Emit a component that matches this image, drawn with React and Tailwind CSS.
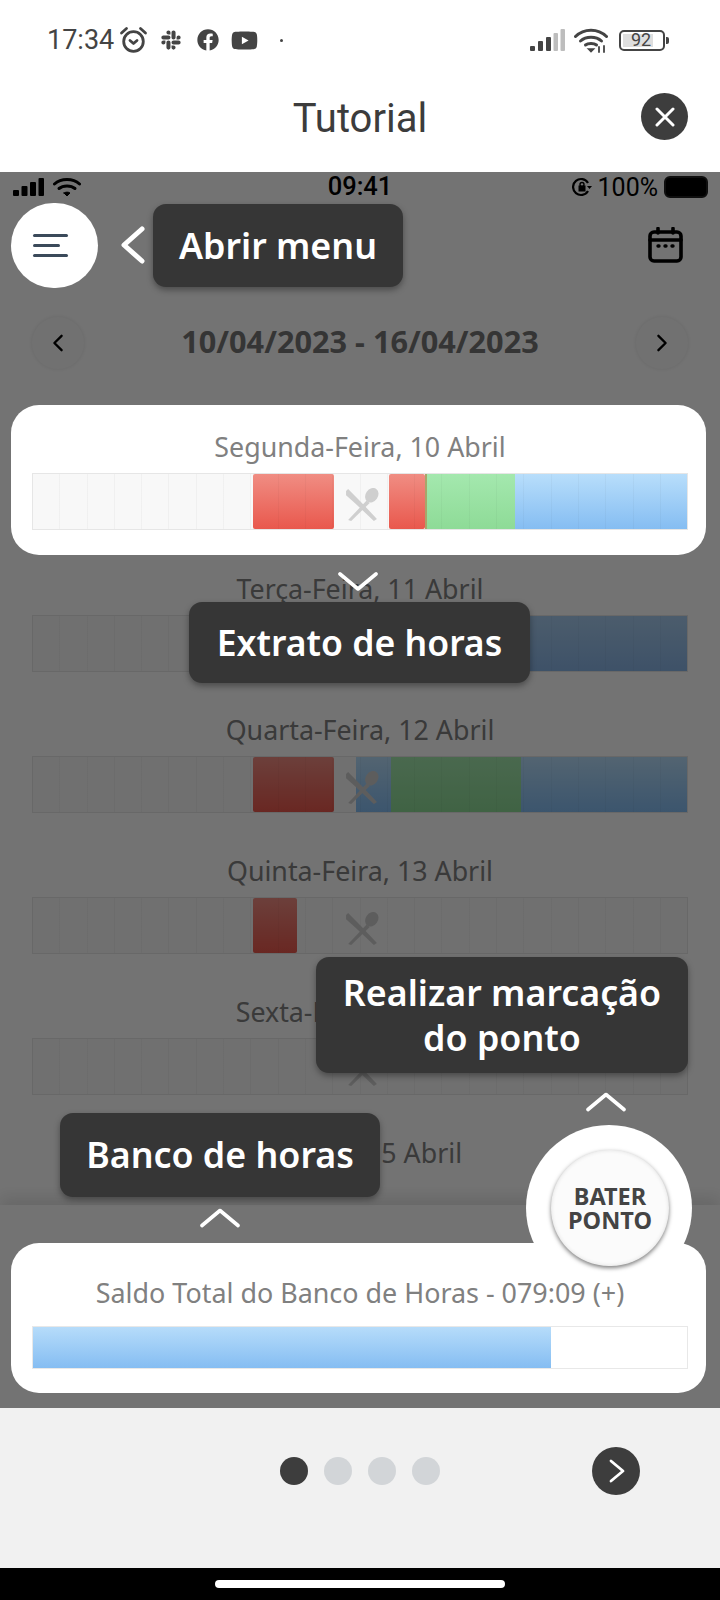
import React from "react";
import { FaSlack, FaFacebook, FaYoutube } from "react-icons/fa";

const Chevron = ({ d, className }) => (
  <svg viewBox="0 0 40 20" className={className} fill="none" stroke="#fff" strokeWidth="3.6" strokeLinecap="round" strokeLinejoin="round">
    <path d={d} />
  </svg>
);
const UP = "M2 18 L20 3 L38 18";
const DOWN = "M2 2 L20 17 L38 2";

const Alarm = () => (
  <svg viewBox="0 0 28 28" className="h-[28px] w-[29px]" fill="none" stroke="#444" strokeWidth="2.8" strokeLinecap="round" strokeLinejoin="round">
    <circle cx="14" cy="15.5" r="9.8" />
    <path d="M10.5 14.5 L14 17.5 L17.5 14.5" />
    <path d="M2 7 L7 2.5 M26 7 L21 2.5" />
  </svg>
);

const Signal = () => (
  <svg viewBox="0 0 35 22" className="h-[22px] w-[35px]" fill="#444">
    <rect x="0" y="17" width="5" height="5" rx="1" />
    <rect x="8" y="12" width="5" height="10" rx="1" />
    <rect x="16" y="8" width="5" height="14" rx="1" />
    <rect x="23.5" y="4" width="4.5" height="18" rx="1" fill="#bdbdbd" />
    <rect x="30.5" y="0" width="4.5" height="22" rx="1" fill="#bdbdbd" />
  </svg>
);

const Wifi = () => (
  <svg viewBox="0 0 34 25" className="h-[25px] w-[34px]" fill="none" stroke="#444" strokeWidth="3" strokeLinecap="round">
    <path d="M1.5 8.5 C10 0 24 0 32.5 8.5" />
    <path d="M6.5 13 C12 8 22 8 27.5 13" />
    <path d="M11.5 17 C14 15 20 15 22.5 17" />
    <path d="M14.5 21 L17 23.5 L19.5 21 Z" fill="#444" strokeWidth="1.6" />
    <path d="M25 19 V24 M30 18 V24" strokeWidth="1.8" />
  </svg>
);

const InnerWifi = () => (
  <svg viewBox="0 0 28 20" className="h-[20px] w-[28px]" fill="none" stroke="#000" strokeWidth="3" strokeLinecap="round">
    <path d="M1.5 7 C8 1 20 1 26.5 7" />
    <path d="M6 11.5 C10 8 18 8 22 11.5" />
    <path d="M11 16 L14 19 L17 16 C15.5 14.8 12.5 14.8 11 16 Z" fill="#000" strokeWidth="1" />
  </svg>
);

const Calendar = () => (
  <svg viewBox="0 0 35 36" className="h-[36px] w-[35px]" fill="none" stroke="#000" strokeWidth="3.6" strokeLinecap="round" strokeLinejoin="round">
    <rect x="2" y="5" width="31" height="29" rx="4" />
    <path d="M2 13 H33" />
    <path d="M10 1.5 V6 M25 1.5 V6" />
    <path d="M10 19 H11 M17 19 H18 M24 19 H25" strokeWidth="3.4" />
  </svg>
);

const Cutlery = () => (
  <svg viewBox="0 0 34 32" className="h-[33px] w-[35px]">
    <path d="M2 3 L4 1 L16 13 L32 30 L29 32 L11 15 L2 7 Z" fill="#cfcfcf" />
    <path d="M4 31 L22 12 L25 14.5 L7 32 Z" fill="#cfcfcf" />
    <ellipse cx="27" cy="7" rx="6" ry="7.5" transform="rotate(35 27 7)" fill="#cfcfcf" />
  </svg>
);

const RED = "bg-[linear-gradient(#f08d83,#e9584d)] rounded-[2px]";
const GREEN = "bg-[linear-gradient(#a4e8ae,#8edb97)]";
const BLUE = "bg-[linear-gradient(#b8defb,#85bdf2)]";

const Bar = ({ segments }) => (
  <div className="relative flex h-[57px] border border-[#e6e6e6] bg-[#f8f8f8]">
    {segments.map((s, i) => (
      <div key={i} className={s[1] || ""} style={{ width: s[0] }} />
    ))}
    <div className="absolute inset-0 bg-[repeating-linear-gradient(90deg,transparent_0,transparent_26.3px,rgba(0,0,0,0.03)_26.3px,rgba(0,0,0,0.03)_27.3px)]" />
    <div className="absolute left-[311px] top-[14px]">
      <Cutlery />
    </div>
  </div>
);

const Day = ({ label, segments, noBar }) => (
  <div className="mx-[32px] mb-[41px]">
    <div className="mb-[9px] h-[34px] text-center text-[26.8px] leading-[34px] text-[#808080]">{label}</div>
    {!noBar && <Bar segments={segments} />}
  </div>
);

const Tip = ({ className, children }) => (
  <div className={"absolute z-20 flex items-center justify-center rounded-[13px] bg-[#363636] text-center font-semibold text-white shadow-[0_3px_6px_rgba(0,0,0,0.35)] " + className}>
    {children}
  </div>
);

export default function App() {
  return (
    <div className="flex h-[1600px] w-[720px] flex-col overflow-hidden bg-white font-['Noto_Sans',sans-serif]">
      {/* device status bar */}
      <div className="flex h-[80px] shrink-0 items-center pl-[47px] pr-[51px] font-['Roboto',sans-serif] text-[#444]">
        <span className="text-[27px] leading-none">17:34</span>
        <span className="ml-[5px]"><Alarm /></span>
        <FaSlack className="ml-[12px] h-[22px] w-[22px]" />
        <FaFacebook className="ml-[15px] h-[22px] w-[22px]" />
        <FaYoutube className="ml-[12px] h-[25px] w-[27px]" />
        <span className="ml-[22px] h-[3px] w-[3px] rounded-full bg-[#444]" />
        <div className="ml-auto flex items-center">
          <Signal />
          <span className="ml-[9px]"><Wifi /></span>
          <div className="ml-[11px] flex h-[21px] w-[46px] items-center rounded-[5px] border-2 border-[#444] p-[2px]">
            <div className="flex h-full w-[30px] items-center justify-center bg-[#dedede] pl-[6px] text-[18px] leading-none">92</div>
          </div>
          <span className="ml-[1px] h-[7px] w-[3px] rounded-r-[2px] bg-[#444]" />
        </div>
      </div>

      {/* title */}
      <div className="relative flex h-[92px] shrink-0 items-center justify-center pb-[14px] font-['Roboto',sans-serif] text-[40px] leading-none text-[#3c3c3c]">
        Tutorial
        <div className="absolute left-[641px] top-[13px] flex h-[47px] w-[47px] items-center justify-center rounded-full bg-[#3d3d3d]">
          <svg viewBox="0 0 20 20" className="h-[20px] w-[20px]" fill="none" stroke="#fff" strokeWidth="3" strokeLinecap="round">
            <path d="M2 2 L18 18 M18 2 L2 18" />
          </svg>
        </div>
      </div>

      {/* tutorial screen */}
      <div className="relative flex min-h-0 flex-1 flex-col overflow-hidden bg-white">
        <div className="absolute inset-0 z-10 bg-black/55" />

        {/* inner status */}
        <div className="relative flex h-[30px] shrink-0 items-center pl-[13px] pr-[12px] font-['Roboto',sans-serif] text-black">
          <svg viewBox="0 0 31 18" className="h-[18px] w-[31px]" fill="#000">
            <rect x="0" y="12" width="6" height="6" rx="1" />
            <rect x="8.5" y="8" width="6" height="10" rx="1" />
            <rect x="17" y="4" width="6" height="14" rx="1" />
            <rect x="25.5" y="0" width="5.5" height="18" rx="1" />
          </svg>
          <span className="ml-[9px]"><InnerWifi /></span>
          <span className="absolute left-0 right-0 text-center text-[25.5px] font-medium leading-none">09:41</span>
          <div className="ml-auto flex items-center">
            <svg viewBox="0 0 20 20" className="h-[20px] w-[20px]" fill="none" stroke="#000" strokeWidth="2.2">
              <path d="M16 6 A8 8 0 1 0 16 14" />
              <rect x="6.5" y="8.5" width="7" height="6" fill="#000" strokeWidth="0" />
              <circle cx="10" cy="7.5" r="2" strokeWidth="1.4" />
              <path d="M15 9 H20 L17.5 12 Z" fill="#000" strokeWidth="0" />
            </svg>
            <span className="ml-[6px] text-[25px] leading-none">100%</span>
            <div className="ml-[6px] h-[22px] w-[44px] rounded-[6px] border-2 border-[#222] bg-black" />
          </div>
        </div>

        {/* header */}
        <div className="flex h-[86px] shrink-0 items-center pl-[11px] pr-[37px]">
          <div className="relative z-20 flex h-[85px] w-[87px] flex-col items-center justify-center rounded-full bg-white pr-[9px]">
            <div className="flex w-[35px] flex-col gap-[7px]">
              <div className="h-[3px] w-full rounded-full bg-[#3b4a5a]" />
              <div className="h-[3px] w-[27px] rounded-full bg-[#3b4a5a]" />
              <div className="h-[3px] w-full rounded-full bg-[#3b4a5a]" />
            </div>
          </div>
          <svg viewBox="0 0 24 38" className="relative z-20 ml-[23px] h-[38px] w-[24px]" fill="none" stroke="#fff" strokeWidth="5" strokeLinecap="round" strokeLinejoin="round">
            <path d="M21 3 L3 19 L21 35" />
          </svg>
          <span className="ml-auto"><Calendar /></span>
        </div>

        {/* date row */}
        <div className="flex shrink-0 items-center justify-between px-[32px] pb-[36px] pt-[29px]">
          <div className="flex h-[52px] w-[52px] items-center justify-center rounded-full bg-[#fbfbfb] shadow-[0_0_4px_rgba(0,0,0,0.1)]">
            <svg viewBox="0 0 12 20" className="h-[18px] w-[12px]" fill="none" stroke="#000" strokeWidth="2.6" strokeLinecap="round" strokeLinejoin="round"><path d="M10 2 L2 10 L10 18" /></svg>
          </div>
          <span className="mb-[4px] text-[30.7px] font-bold leading-none text-[#777]">10/04/2023 - 16/04/2023</span>
          <div className="flex h-[52px] w-[52px] items-center justify-center rounded-full bg-[#fbfbfb] shadow-[0_0_4px_rgba(0,0,0,0.1)]">
            <svg viewBox="0 0 12 20" className="h-[18px] w-[12px]" fill="none" stroke="#000" strokeWidth="2.6" strokeLinecap="round" strokeLinejoin="round"><path d="M2 2 L10 10 L2 18" /></svg>
          </div>
        </div>

        {/* list */}
        <div className="min-h-0 flex-1 overflow-hidden">
          <div className="relative z-20 mb-[17px] ml-[11px] mr-[14px] h-[150px] rounded-[28px] bg-white pl-[21px] pr-[18px] pt-[25px]">
            <div className="mb-[9px] h-[34px] text-center text-[26.8px] leading-[34px] text-[#808080]">Segunda-Feira, 10 Abril</div>
            <Bar segments={[[220], [81, RED], [55], [36, RED], [2, "bg-[#a9a56a]"], [88, GREEN], [172, BLUE]]} />
          </div>
          <Day label="Terça-Feira, 11 Abril" segments={[[470], [184, "bg-[linear-gradient(#a8cdf0,#8ab5e6)]"]]} />
          <Day label="Quarta-Feira, 12 Abril" segments={[[220], [81, RED], [22], [35, BLUE], [130, GREEN], [166, BLUE]]} />
          <Day label="Quinta-Feira, 13 Abril" segments={[[220], [44, RED]]} />
          <Day label="Sexta-Feira, 14 Abril" segments={[]} />
          <Day label="Sábado, 15 Abril" noBar />
        </div>

        {/* clock-in button halo: sits under the balance card */}
        <div className="absolute left-[526px] top-[953px] z-20 h-[166px] w-[166px] rounded-full bg-white" />

        {/* bottom panel */}
        <div className="relative h-[203px] shrink-0 bg-white pl-[11px] pr-[14px] pt-[38px] shadow-[0_-8px_14px_rgba(0,0,0,0.1)]">
          <div className="relative z-20 h-[150px] rounded-[28px] bg-white pl-[21px] pr-[18px] pt-[33px]">
            <div className="mb-[16px] h-[34px] whitespace-nowrap text-center text-[26.9px] leading-[34px] text-[#808080]">Saldo Total do Banco de Horas - 079:09 (+)</div>
            <div className="flex h-[43px] border border-[#e8e8e8] bg-white">
              <div className="w-[518px] bg-[linear-gradient(#b6dcfa,#85bdf2)]" />
            </div>
          </div>
        </div>

        {/* clock-in button */}
        <div className="absolute left-[551px] top-[978px] z-30 flex h-[116px] w-[118px] flex-col items-center justify-center rounded-full bg-[#fbfbfb] text-[23.5px] font-bold leading-[24px] text-[#444] shadow-[0_2px_4px_rgba(0,0,0,0.5),inset_0_0_4px_rgba(0,0,0,0.12)]">
          <span>BATER</span>
          <span>PONTO</span>
        </div>

        {/* tooltips */}
        <Tip className="left-[153px] top-[32px] h-[83px] w-[250px] text-[35.8px]">Abrir menu</Tip>
        <Tip className="left-[189px] top-[430px] h-[81px] w-[341px] text-[35.6px]">Extrato de horas</Tip>
        <Tip className="left-[316px] top-[785px] h-[116px] w-[372px] text-[35.8px] leading-[45px]">Realizar marcação<br />do ponto</Tip>
        <Tip className="left-[60px] top-[941px] h-[84px] w-[320px] text-[35.8px]">Banco de horas</Tip>

        <Chevron d={DOWN} className="absolute left-[338px] top-[400px] z-20 h-[20px] w-[40px]" />
        <Chevron d={UP} className="absolute left-[586px] top-[919px] z-20 h-[21px] w-[40px]" />
        <Chevron d={UP} className="absolute left-[200px] top-[1035px] z-20 h-[21px] w-[40px]" />
      </div>

      {/* footer */}
      <div className="flex h-[160px] shrink-0 items-center bg-[#f1f1f1] pb-[34px] pl-[280px] pr-[80px]">
        <div className="flex gap-[16px]">
          <div className="h-[28px] w-[28px] rounded-full bg-[#3d3d3d]" />
          <div className="h-[28px] w-[28px] rounded-full bg-[#d2d5d8]" />
          <div className="h-[28px] w-[28px] rounded-full bg-[#d2d5d8]" />
          <div className="h-[28px] w-[28px] rounded-full bg-[#d2d5d8]" />
        </div>
        <div className="ml-auto flex h-[48px] w-[48px] items-center justify-center rounded-full bg-[#3d3d3d]">
          <svg viewBox="0 0 16 24" className="ml-[2px] h-[24px] w-[16px]" fill="none" stroke="#fff" strokeWidth="2.8" strokeLinecap="round" strokeLinejoin="round"><path d="M2 2 L14 12 L2 22" /></svg>
        </div>
      </div>

      {/* nav bar */}
      <div className="flex h-[32px] shrink-0 items-center justify-center bg-black">
        <div className="h-[8px] w-[290px] rounded-full bg-white" />
      </div>
    </div>
  );
}
